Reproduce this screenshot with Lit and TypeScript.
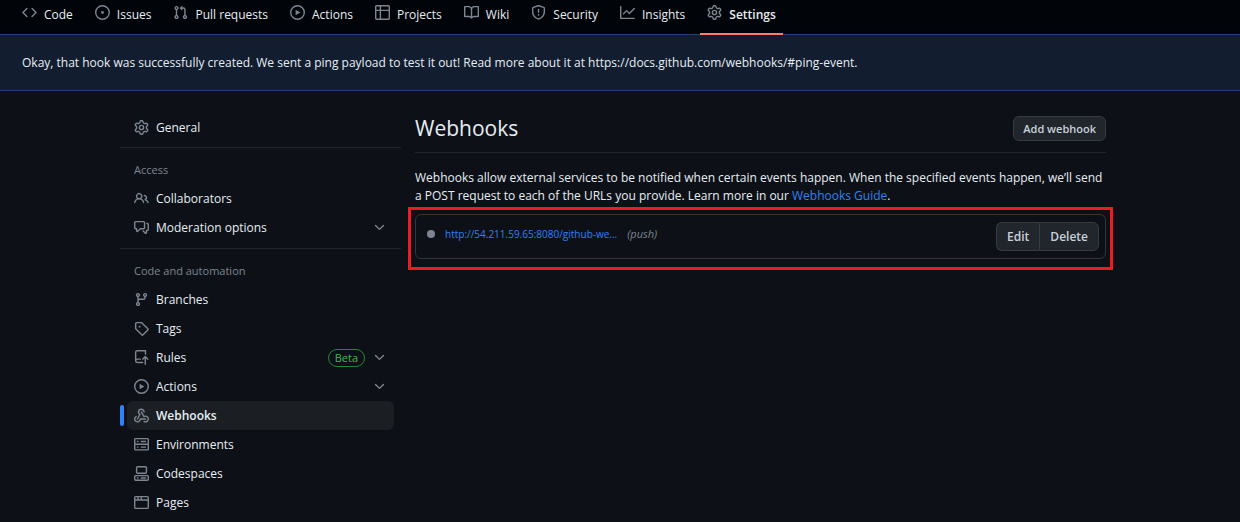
import { LitElement, html, css, svg, nothing } from "lit";
import { customElement, property } from "lit/decorators.js";

const icons: Record<string, string> = {
  code: "m11.28 3.22 4.25 4.25a.75.75 0 0 1 0 1.06l-4.25 4.25a.749.749 0 0 1-1.275-.326.749.749 0 0 1 .215-.734L13.94 8l-3.72-3.72a.749.749 0 0 1 .326-1.275.749.749 0 0 1 .734.215Zm-6.56 0a.751.751 0 0 1 1.042.018.751.751 0 0 1 .018 1.042L2.06 8l3.72 3.72a.749.749 0 0 1-.326 1.275.749.749 0 0 1-.734-.215L.47 8.53a.75.75 0 0 1 0-1.06Z",
  issue: "M8 9.5a1.5 1.5 0 1 0 0-3 1.5 1.5 0 0 0 0 3Z M8 0a8 8 0 1 1 0 16A8 8 0 0 1 8 0ZM1.5 8a6.5 6.5 0 1 0 13 0 6.5 6.5 0 0 0-13 0Z",
  pull: "M1.5 3.25a2.25 2.25 0 1 1 3 2.122v5.256a2.251 2.251 0 1 1-1.5 0V5.372A2.25 2.25 0 0 1 1.5 3.25Zm5.677-.177L9.573.677A.25.25 0 0 1 10 .854V2.5h1A2.5 2.5 0 0 1 13.5 5v5.628a2.251 2.251 0 1 1-1.5 0V5a1 1 0 0 0-1-1h-1v1.646a.25.25 0 0 1-.427.177L7.177 3.427a.25.25 0 0 1 0-.354ZM3.75 2.5a.75.75 0 1 0 0 1.5.75.75 0 0 0 0-1.5Zm0 9.5a.75.75 0 1 0 0 1.5.75.75 0 0 0 0-1.5Zm8.25.75a.75.75 0 1 0 1.5 0 .75.75 0 0 0-1.5 0Z",
  play: "M8 0a8 8 0 1 1 0 16A8 8 0 0 1 8 0ZM1.5 8a6.5 6.5 0 1 0 13 0 6.5 6.5 0 0 0-13 0Zm4.879-2.773 4.264 2.559a.25.25 0 0 1 0 .428l-4.264 2.559A.25.25 0 0 1 6 10.559V5.442a.25.25 0 0 1 .379-.215Z",
  table: "M0 1.75C0 .784.784 0 1.75 0h12.5C15.216 0 16 .784 16 1.75v12.5A1.75 1.75 0 0 1 14.25 16H1.75A1.75 1.75 0 0 1 0 14.25ZM6.5 6.5v8h7.75a.25.25 0 0 0 .25-.25V6.5Zm8-1.5V1.75a.25.25 0 0 0-.25-.25H6.5V5Zm-13 1.5v7.75c0 .138.112.25.25.25H5v-8ZM5 5V1.5H1.75a.25.25 0 0 0-.25.25V5Z",
  book: "M0 1.75A.75.75 0 0 1 .75 1h4.253c1.227 0 2.317.59 3 1.501A3.743 3.743 0 0 1 11.006 1h4.245a.75.75 0 0 1 .75.75v10.5a.75.75 0 0 1-.75.75h-4.507a2.25 2.25 0 0 0-1.591.659l-.622.621a.75.75 0 0 1-1.06 0l-.622-.621A2.25 2.25 0 0 0 5.258 13H.75a.75.75 0 0 1-.75-.75Zm7.251 10.324.004-5.073-.002-2.253A2.25 2.25 0 0 0 5.003 2.5H1.5v9h3.757a3.75 3.75 0 0 1 1.994.574ZM8.755 4.75l-.004 7.322a3.752 3.752 0 0 1 1.992-.572H14.5v-9h-3.495a2.25 2.25 0 0 0-2.25 2.25Z",
  shield: "M7.467.133a1.748 1.748 0 0 1 1.066 0l5.25 1.68A1.75 1.75 0 0 1 15 3.48V7c0 1.566-.32 3.182-1.303 4.682-.983 1.498-2.585 2.813-5.032 3.855a1.697 1.697 0 0 1-1.33 0c-2.447-1.042-4.049-2.357-5.032-3.855C1.32 10.182 1 8.566 1 7V3.48a1.75 1.75 0 0 1 1.217-1.667Zm.61 1.429a.25.25 0 0 0-.153 0l-5.25 1.68a.25.25 0 0 0-.174.238V7c0 1.358.275 2.666 1.057 3.86.784 1.194 2.121 2.34 4.366 3.297a.196.196 0 0 0 .154 0c2.245-.956 3.582-2.104 4.366-3.298C13.225 9.666 13.5 8.36 13.5 7V3.48a.251.251 0 0 0-.174-.237l-5.25-1.68ZM8.75 4.75v3a.75.75 0 0 1-1.5 0v-3a.75.75 0 0 1 1.5 0ZM9 10.5a1 1 0 1 1-2 0 1 1 0 0 1 2 0Z",
  graph: "M1.5 1.75V13.5h13.75a.75.75 0 0 1 0 1.5H.75a.75.75 0 0 1-.75-.75V1.75a.75.75 0 0 1 1.5 0Zm14.28 2.53-5.25 5.25a.75.75 0 0 1-1.06 0L7 7.06 4.28 9.78a.751.751 0 0 1-1.042-.018.751.751 0 0 1-.018-1.042l3.25-3.25a.75.75 0 0 1 1.06 0L10 7.94l4.72-4.72a.751.751 0 0 1 1.042.018.751.751 0 0 1 .018 1.042Z",
  gear: "M8 0a8.2 8.2 0 0 1 .701.031C9.444.095 9.99.645 10.16 1.29l.288 1.107c.018.066.079.158.212.224.231.114.454.243.668.386.123.082.233.09.299.071l1.103-.303c.644-.176 1.392.021 1.82.63.27.385.506.792.704 1.218.315.675.111 1.422-.364 1.891l-.814.806c-.049.048-.098.147-.088.294.016.257.016.515 0 .772-.01.147.038.246.088.294l.814.806c.475.469.679 1.216.364 1.891a7.977 7.977 0 0 1-.704 1.217c-.428.61-1.176.807-1.82.63l-1.102-.302c-.067-.019-.177-.011-.3.071a5.909 5.909 0 0 1-.668.386c-.133.066-.194.158-.211.224l-.29 1.106c-.168.646-.715 1.196-1.458 1.26a8.006 8.006 0 0 1-1.402 0c-.743-.064-1.289-.614-1.458-1.26l-.289-1.106c-.018-.066-.079-.158-.212-.224a5.738 5.738 0 0 1-.668-.386c-.123-.082-.233-.09-.299-.071l-1.103.303c-.644.176-1.392-.021-1.82-.63a8.12 8.12 0 0 1-.704-1.218c-.315-.675-.111-1.422.363-1.891l.815-.806c.05-.048.098-.147.088-.294a6.214 6.214 0 0 1 0-.772c.01-.147-.038-.246-.088-.294l-.815-.806C.635 6.045.431 5.298.746 4.623a7.92 7.92 0 0 1 .704-1.217c.428-.61 1.176-.807 1.82-.63l1.102.302c.067.019.177.011.3-.071.214-.143.437-.272.668-.386.133-.066.194-.158.211-.224l.29-1.106C6.009.645 6.556.095 7.299.03 7.53.01 7.764 0 8 0Zm-.571 1.525c-.036.003-.108.036-.137.146l-.289 1.105c-.147.561-.549.967-.998 1.189-.173.086-.34.183-.5.29-.417.278-.97.423-1.529.27l-1.103-.303c-.109-.03-.175.016-.195.045-.22.312-.412.644-.573.99-.014.031-.021.11.059.19l.815.806c.411.406.562.957.53 1.456a4.709 4.709 0 0 0 0 .582c.032.499-.119 1.05-.53 1.456l-.815.806c-.081.08-.073.159-.059.19.162.346.353.677.573.989.02.03.085.076.195.046l1.102-.303c.56-.153 1.113-.008 1.53.27.161.107.328.204.501.29.447.222.85.629.997 1.189l.289 1.105c.029.109.101.143.137.146a6.6 6.6 0 0 0 1.142 0c.036-.003.108-.036.137-.146l.289-1.105c.147-.561.549-.967.998-1.189.173-.086.34-.183.5-.29.417-.278.97-.423 1.529-.27l1.103.303c.109.029.175-.016.195-.045.22-.313.411-.644.573-.99.014-.031.021-.11-.059-.19l-.815-.806c-.411-.406-.562-.957-.53-1.456a4.709 4.709 0 0 0 0-.582c-.032-.499.119-1.05.53-1.456l.815-.806c.081-.08.073-.159.059-.19a6.464 6.464 0 0 0-.573-.989c-.02-.03-.085-.076-.195-.046l-1.102.303c-.56.153-1.113.008-1.53-.27a4.44 4.44 0 0 0-.501-.29c-.447-.222-.85-.629-.997-1.189l-.289-1.105c-.029-.11-.101-.143-.137-.146a6.6 6.6 0 0 0-1.142 0ZM11 8a3 3 0 1 1-6 0 3 3 0 0 1 6 0ZM9.5 8a1.5 1.5 0 1 0-3.001.001A1.5 1.5 0 0 0 9.5 8Z",
  people: "M2 5.5a3.5 3.5 0 1 1 5.898 2.549 5.508 5.508 0 0 1 3.034 4.084.75.75 0 1 1-1.482.235 4 4 0 0 0-7.9 0 .75.75 0 0 1-1.482-.236A5.507 5.507 0 0 1 3.102 8.05 3.493 3.493 0 0 1 2 5.5ZM11 4a3.001 3.001 0 0 1 2.22 5.018 5.01 5.01 0 0 1 2.56 3.012.749.749 0 0 1-.885.954.752.752 0 0 1-.549-.514 3.507 3.507 0 0 0-2.522-2.372.75.75 0 0 1-.574-.73v-.352a.75.75 0 0 1 .416-.672A1.5 1.5 0 0 0 11 5.5.75.75 0 0 1 11 4Zm-5.5-.5a2 2 0 1 0-.001 3.999A2 2 0 0 0 5.5 3.5Z",
  comments: "M1.75 1h8.5c.966 0 1.75.784 1.75 1.75v5.5A1.75 1.75 0 0 1 10.25 10H7.061l-2.574 2.573A1.458 1.458 0 0 1 2 11.543V10h-.25A1.75 1.75 0 0 1 0 8.25v-5.5C0 1.784.784 1 1.75 1ZM1.5 2.75v5.5c0 .138.112.25.25.25h1a.75.75 0 0 1 .75.75v2.19l2.72-2.72a.749.749 0 0 1 .53-.22h3.5a.25.25 0 0 0 .25-.25v-5.5a.25.25 0 0 0-.25-.25h-8.5a.25.25 0 0 0-.25.25Zm13 2a.25.25 0 0 0-.25-.25h-.5a.75.75 0 0 1 0-1.5h.5c.966 0 1.75.784 1.75 1.75v5.5A1.75 1.75 0 0 1 14.25 12H14v1.543a1.458 1.458 0 0 1-2.487 1.03L9.22 12.28a.749.749 0 0 1 .326-1.275.749.749 0 0 1 .734.215l2.22 2.22v-2.19a.75.75 0 0 1 .75-.75h1a.25.25 0 0 0 .25-.25Z",
  branch: "M9.5 3.25a2.25 2.25 0 1 1 3 2.122V6A2.5 2.5 0 0 1 10 8.5H6a1 1 0 0 0-1 1v1.128a2.251 2.251 0 1 1-1.5 0V5.372a2.25 2.25 0 1 1 1.5 0v1.836A2.493 2.493 0 0 1 6 7h4a1 1 0 0 0 1-1v-.628A2.25 2.25 0 0 1 9.5 3.25Zm-6 0a.75.75 0 1 0 1.5 0 .75.75 0 0 0-1.5 0Zm8.25-.75a.75.75 0 1 0 0 1.5.75.75 0 0 0 0-1.5ZM4.25 12a.75.75 0 1 0 0 1.5.75.75 0 0 0 0-1.5Z",
  tag: "M1 7.775V2.75C1 1.784 1.784 1 2.75 1h5.025c.464 0 .91.184 1.238.513l6.25 6.25a1.75 1.75 0 0 1 0 2.474l-5.026 5.026a1.75 1.75 0 0 1-2.474 0l-6.25-6.25A1.752 1.752 0 0 1 1 7.775Zm1.5 0c0 .066.026.13.073.177l6.25 6.25a.25.25 0 0 0 .354 0l5.025-5.025a.25.25 0 0 0 0-.354l-6.25-6.25a.25.25 0 0 0-.177-.073H2.75a.25.25 0 0 0-.25.25ZM6 5a1 1 0 1 1 0 2 1 1 0 0 1 0-2Z",
  rules: "M1 2.5A2.5 2.5 0 0 1 3.5 0h8.75a.75.75 0 0 1 .75.75v3.5a.75.75 0 0 1-1.5 0V1.5h-8a1 1 0 0 0-1 1v6.708A2.493 2.493 0 0 1 3.5 9h3.25a.75.75 0 0 1 0 1.5H3.5a1 1 0 0 0 0 2h5.75a.75.75 0 0 1 0 1.5H3.5A2.5 2.5 0 0 1 1 11.5Zm13.23 7.79-1.48-1.48v6.44a.75.75 0 0 1-1.5 0V8.81l-1.48 1.48a.751.751 0 0 1-1.042-.018.751.751 0 0 1-.018-1.042l2.76-2.76a.75.75 0 0 1 1.06 0l2.76 2.76a.75.75 0 0 1-1.06 1.06Z",
  webhook: "M5.5 4.25a2.25 2.25 0 0 1 4.5 0 .75.75 0 0 0 1.5 0 3.75 3.75 0 1 0-6.14 2.889l-2.272 4.258a.75.75 0 0 0 1.324.706L7 7.25a.75.75 0 0 0-.309-1.015A2.25 2.25 0 0 1 5.5 4.25Z M7.364 3.607a.75.75 0 0 1 1.03.257l2.608 4.349a3.75 3.75 0 1 1-.628 6.785.75.75 0 0 1 .752-1.299 2.25 2.25 0 1 0-.033-3.88.75.75 0 0 1-1.03-.256L7.107 4.636a.75.75 0 0 1 .257-1.03Z M2.9 8.776A.75.75 0 0 1 2.625 9.8 2.25 2.25 0 1 0 6 11.75a.75.75 0 0 1 .75-.751h5.5a.75.75 0 0 1 0 1.5H7.425a3.751 3.751 0 1 1-5.55-3.998.75.75 0 0 1 1.024.274Z",
  server: "M1.75 1h12.5c.966 0 1.75.784 1.75 1.75v4c0 .372-.116.717-.314 1 .198.283.314.628.314 1v4a1.75 1.75 0 0 1-1.75 1.75H1.75A1.75 1.75 0 0 1 0 12.75v-4c0-.358.109-.707.314-1a1.739 1.739 0 0 1-.314-1v-4C0 1.784.784 1 1.75 1ZM1.5 2.75v4c0 .138.112.25.25.25h12.5a.25.25 0 0 0 .25-.25v-4a.25.25 0 0 0-.25-.25H1.75a.25.25 0 0 0-.25.25Zm.25 5.75a.25.25 0 0 0-.25.25v4c0 .138.112.25.25.25h12.5a.25.25 0 0 0 .25-.25v-4a.25.25 0 0 0-.25-.25ZM7 4.75A.75.75 0 0 1 7.75 4h4.5a.75.75 0 0 1 0 1.5h-4.5A.75.75 0 0 1 7 4.75ZM7.75 10h4.5a.75.75 0 0 1 0 1.5h-4.5a.75.75 0 0 1 0-1.5ZM3 4.75A.75.75 0 0 1 3.75 4h.5a.75.75 0 0 1 0 1.5h-.5A.75.75 0 0 1 3 4.75ZM3.75 10h.5a.75.75 0 0 1 0 1.5h-.5a.75.75 0 0 1 0-1.5Z",
  codespaces: "M0 11.25c0-.966.784-1.75 1.75-1.75h12.5c.966 0 1.75.784 1.75 1.75v3A1.75 1.75 0 0 1 14.25 16H1.75A1.75 1.75 0 0 1 0 14.25Zm2-9.5C2 .784 2.784 0 3.75 0h8.5C13.216 0 14 .784 14 1.75v5a1.75 1.75 0 0 1-1.75 1.75h-8.5A1.75 1.75 0 0 1 2 6.75Zm1.75-.25a.25.25 0 0 0-.25.25v5c0 .138.112.25.25.25h8.5a.25.25 0 0 0 .25-.25v-5a.25.25 0 0 0-.25-.25Zm-2 9.5a.25.25 0 0 0-.25.25v3c0 .138.112.25.25.25h12.5a.25.25 0 0 0 .25-.25v-3a.25.25 0 0 0-.25-.25Z M7 12.75a.75.75 0 0 1 .75-.75h4.5a.75.75 0 0 1 0 1.5h-4.5a.75.75 0 0 1-.75-.75Zm-4 0a.75.75 0 0 1 .75-.75h.5a.75.75 0 0 1 0 1.5h-.5a.75.75 0 0 1-.75-.75Z",
  browser: "M0 2.75C0 1.784.784 1 1.75 1h12.5c.966 0 1.75.784 1.75 1.75v10.5A1.75 1.75 0 0 1 14.25 15H1.75A1.75 1.75 0 0 1 0 13.25ZM14.5 6h-13v7.25c0 .138.112.25.25.25h12.5a.25.25 0 0 0 .25-.25Zm-6-3.5v2h6V2.75a.25.25 0 0 0-.25-.25ZM5 2.5v2h2v-2Zm-3.25 0a.25.25 0 0 0-.25.25V4.5h2v-2Z",
  chevron: "M12.78 5.22a.749.749 0 0 1 0 1.06l-4.25 4.25a.749.749 0 0 1-1.06 0L3.22 6.28a.749.749 0 1 1 1.06-1.06L8 8.939l3.72-3.719a.749.749 0 0 1 1.06 0Z",
};

@customElement("oct-icon")
export class OctIcon extends LitElement {
  static styles = css`
    :host {
      display: block;
      flex: none;
      width: 15px;
      height: 15px;
      color: #7d8590;
    }
    .glyph {
      display: block;
      width: 100%;
      height: 100%;
      fill: currentColor;
    }
  `;
  @property() name = "";
  render() {
    return html`<svg class="glyph" viewBox="0 0 16 16" aria-hidden="true">
      ${svg`<path fill-rule="evenodd" d=${icons[this.name]}></path>`}
    </svg>`;
  }
}

interface Item {
  icon: string;
  label: string;
  badge?: string;
  expandable?: boolean;
  current?: boolean;
}

const tabs: Item[] = [
  { icon: "code", label: "Code" },
  { icon: "issue", label: "Issues" },
  { icon: "pull", label: "Pull requests" },
  { icon: "play", label: "Actions" },
  { icon: "table", label: "Projects" },
  { icon: "book", label: "Wiki" },
  { icon: "shield", label: "Security" },
  { icon: "graph", label: "Insights" },
  { icon: "gear", label: "Settings", current: true },
];

const groups: { title?: string; items: Item[] }[] = [
  { items: [{ icon: "gear", label: "General" }] },
  {
    title: "Access",
    items: [
      { icon: "people", label: "Collaborators" },
      { icon: "comments", label: "Moderation options", expandable: true },
    ],
  },
  {
    title: "Code and automation",
    items: [
      { icon: "branch", label: "Branches" },
      { icon: "tag", label: "Tags" },
      { icon: "rules", label: "Rules", badge: "Beta", expandable: true },
      { icon: "play", label: "Actions", expandable: true },
      { icon: "webhook", label: "Webhooks", current: true },
      { icon: "server", label: "Environments" },
      { icon: "codespaces", label: "Codespaces" },
      { icon: "browser", label: "Pages" },
    ],
  },
];

@customElement("repo-tabs")
export class RepoTabs extends LitElement {
  static styles = css`
    :host {
      display: block;
      background: #010409;
      border-bottom: 1px solid #1e4273;
    }
    .tabs {
      display: flex;
      gap: 8px;
      height: 34px;
      padding: 0 15px;
    }
    .tab {
      display: flex;
      gap: 7px;
      box-sizing: border-box;
      height: 35px;
      padding: 5px 7px 0;
      border-bottom: 2px solid transparent;
      color: #e6edf3;
      line-height: 20px;
      text-decoration: none;
      white-space: nowrap;
    }
    .current {
      border-bottom-color: #f78166;
      font-weight: 600;
    }
  `;
  render() {
    return html`<nav class="tabs" aria-label="Repository">
      ${tabs.map(
        (t) => html`<a class="tab ${t.current ? "current" : ""}" href="#" aria-current=${t.current ? "page" : nothing}
          ><oct-icon name=${t.icon}></oct-icon><span>${t.label}</span></a
        >`,
      )}
    </nav>`;
  }
}

@customElement("settings-nav")
export class SettingsNav extends LitElement {
  static styles = css`
    :host {
      display: block;
    }
    .group {
      padding-bottom: 5px;
    }
    .group + .group {
      padding: 8px 0 6px;
      border-top: 1px solid #21262d;
    }
    .title {
      margin: 0;
      padding: 0 14px;
      color: #7d8590;
      font-size: 11px;
      font-weight: 400;
      line-height: 28px;
    }
    .list {
      margin: 0;
      padding: 0;
      list-style: none;
    }
    .row {
      display: flex;
      align-items: center;
    }
    .marker {
      width: 4px;
      height: 21px;
      margin-right: 3px;
      border-radius: 4px;
    }
    .link {
      display: flex;
      flex: 1;
      align-items: center;
      gap: 7px;
      height: 29px;
      margin-right: 7px;
      padding: 0 7px;
      border-radius: 6px;
      color: #e6edf3;
      text-decoration: none;
      white-space: nowrap;
    }
    .current .marker {
      background: #2f81f7;
    }
    .current .link {
      background: #1b1f23;
      font-weight: 600;
    }
    .label {
      flex: 1;
    }
    .badge {
      padding: 0 6px;
      border: 1px solid #238636;
      border-radius: 18px;
      color: #3fb950;
      font-size: 11px;
      line-height: 16px;
    }
  `;
  render() {
    return html`<nav aria-label="Settings">
      ${groups.map(
        (g) => html`<section class="group">
          ${g.title ? html`<h3 class="title">${g.title}</h3>` : nothing}
          <ul class="list">
            ${g.items.map(
              (i) => html`<li class="row ${i.current ? "current" : ""}">
                <span class="marker"></span>
                <a class="link" href="#" aria-current=${i.current ? "page" : nothing}>
                  <oct-icon name=${i.icon}></oct-icon>
                  <span class="label">${i.label}</span>
                  ${i.badge ? html`<span class="badge">${i.badge}</span>` : nothing}
                  ${i.expandable ? html`<oct-icon name="chevron"></oct-icon>` : nothing}
                </a>
              </li>`,
            )}
          </ul>
        </section>`,
      )}
    </nav>`;
  }
}

@customElement("webhooks-panel")
export class WebhooksPanel extends LitElement {
  static styles = css`
    :host {
      display: block;
      min-width: 0;
    }
    .head {
      display: flex;
      align-items: center;
      justify-content: space-between;
      padding-bottom: 11px;
      border-bottom: 1px solid #21262d;
    }
    .heading {
      margin: 0;
      font-size: 21px;
      font-weight: 400;
      line-height: 25px;
    }
    .intro {
      margin: 16px 0 9px;
      line-height: 18px;
    }
    .anchor {
      color: #2f81f7;
      text-decoration: none;
    }
    .button {
      box-sizing: border-box;
      height: 29px;
      padding: 0 10px;
      border: 1px solid #363b42;
      border-radius: 6px;
      background: #21262d;
      color: #c9d1d9;
      font: inherit;
      font-weight: 600;
      white-space: nowrap;
    }
    .small {
      height: 25px;
      padding: 0 9px;
      font-size: 11px;
    }
    .hook {
      display: flex;
      align-items: flex-start;
      justify-content: space-between;
      position: relative;
      padding: 7px 6px 7px 11px;
      border: 1px solid #30363d;
      border-radius: 6px;
    }
    .hook::after {
      content: "";
      position: absolute;
      inset: -8px -8px -12px;
      border: 3px solid #ed1c24;
      pointer-events: none;
    }
    .summary {
      display: flex;
      align-items: center;
      padding-top: 3px;
      font-size: 11px;
      line-height: 18px;
    }
    .url {
      font-size: 10px;
    }
    .dot {
      width: 8px;
      height: 8px;
      margin-right: 10px;
      border-radius: 50%;
      background: #7d8590;
    }
    .events {
      margin-left: 10px;
      color: #7d8590;
      font-style: italic;
    }
    .actions {
      display: flex;
    }
    .actions .button:first-child {
      border-radius: 6px 0 0 6px;
      border-right: 0;
    }
    .actions .button:last-child {
      border-radius: 0 6px 6px 0;
    }
  `;
  render() {
    return html`<header class="head">
        <h2 class="heading">Webhooks</h2>
        <button class="button small" type="button">Add webhook</button>
      </header>
      <p class="intro">
        Webhooks allow external services to be notified when certain events happen. When the specified events happen,
        we’ll send a POST request to each of the URLs you provide. Learn more in our
        <a class="anchor" href="#">Webhooks Guide</a>.
      </p>
      <div class="hook">
        <div class="summary">
          <span class="dot"></span>
          <a class="anchor url" href="#">http://54.211.59.65:8080/github-we...</a>
          <span class="events">(push)</span>
        </div>
        <div class="actions">
          <button class="button" type="button">Edit</button>
          <button class="button" type="button">Delete</button>
        </div>
      </div>`;
  }
}

@customElement("app-root")
export class AppRoot extends LitElement {
  static styles = css`
    :host {
      display: block;
      min-height: 100vh;
      background: #0d1117;
      color: #e6edf3;
      font: 12px/18px "Segoe UI", "Open Sans", "Noto Sans", sans-serif;
    }
    .flash {
      padding: 19px 22px 18px;
      border-bottom: 1px solid #1e4273;
      background: #121d2f;
    }
    .layout {
      display: grid;
      grid-template-columns: 281px minmax(0, 1fr);
      gap: 14px;
      max-width: 986px;
      margin: 0 auto;
      padding: 22px 14px 0 0;
    }
    .main {
      padding-top: 3px;
    }
  `;
  render() {
    return html`<repo-tabs></repo-tabs>
      <div class="flash" role="status">
        Okay, that hook was successfully created. We sent a ping payload to test it out! Read more about it at
        https://docs.github.com/webhooks/#ping-event.
      </div>
      <div class="layout">
        <settings-nav></settings-nav>
        <main class="main"><webhooks-panel></webhooks-panel></main>
      </div>`;
  }
}
